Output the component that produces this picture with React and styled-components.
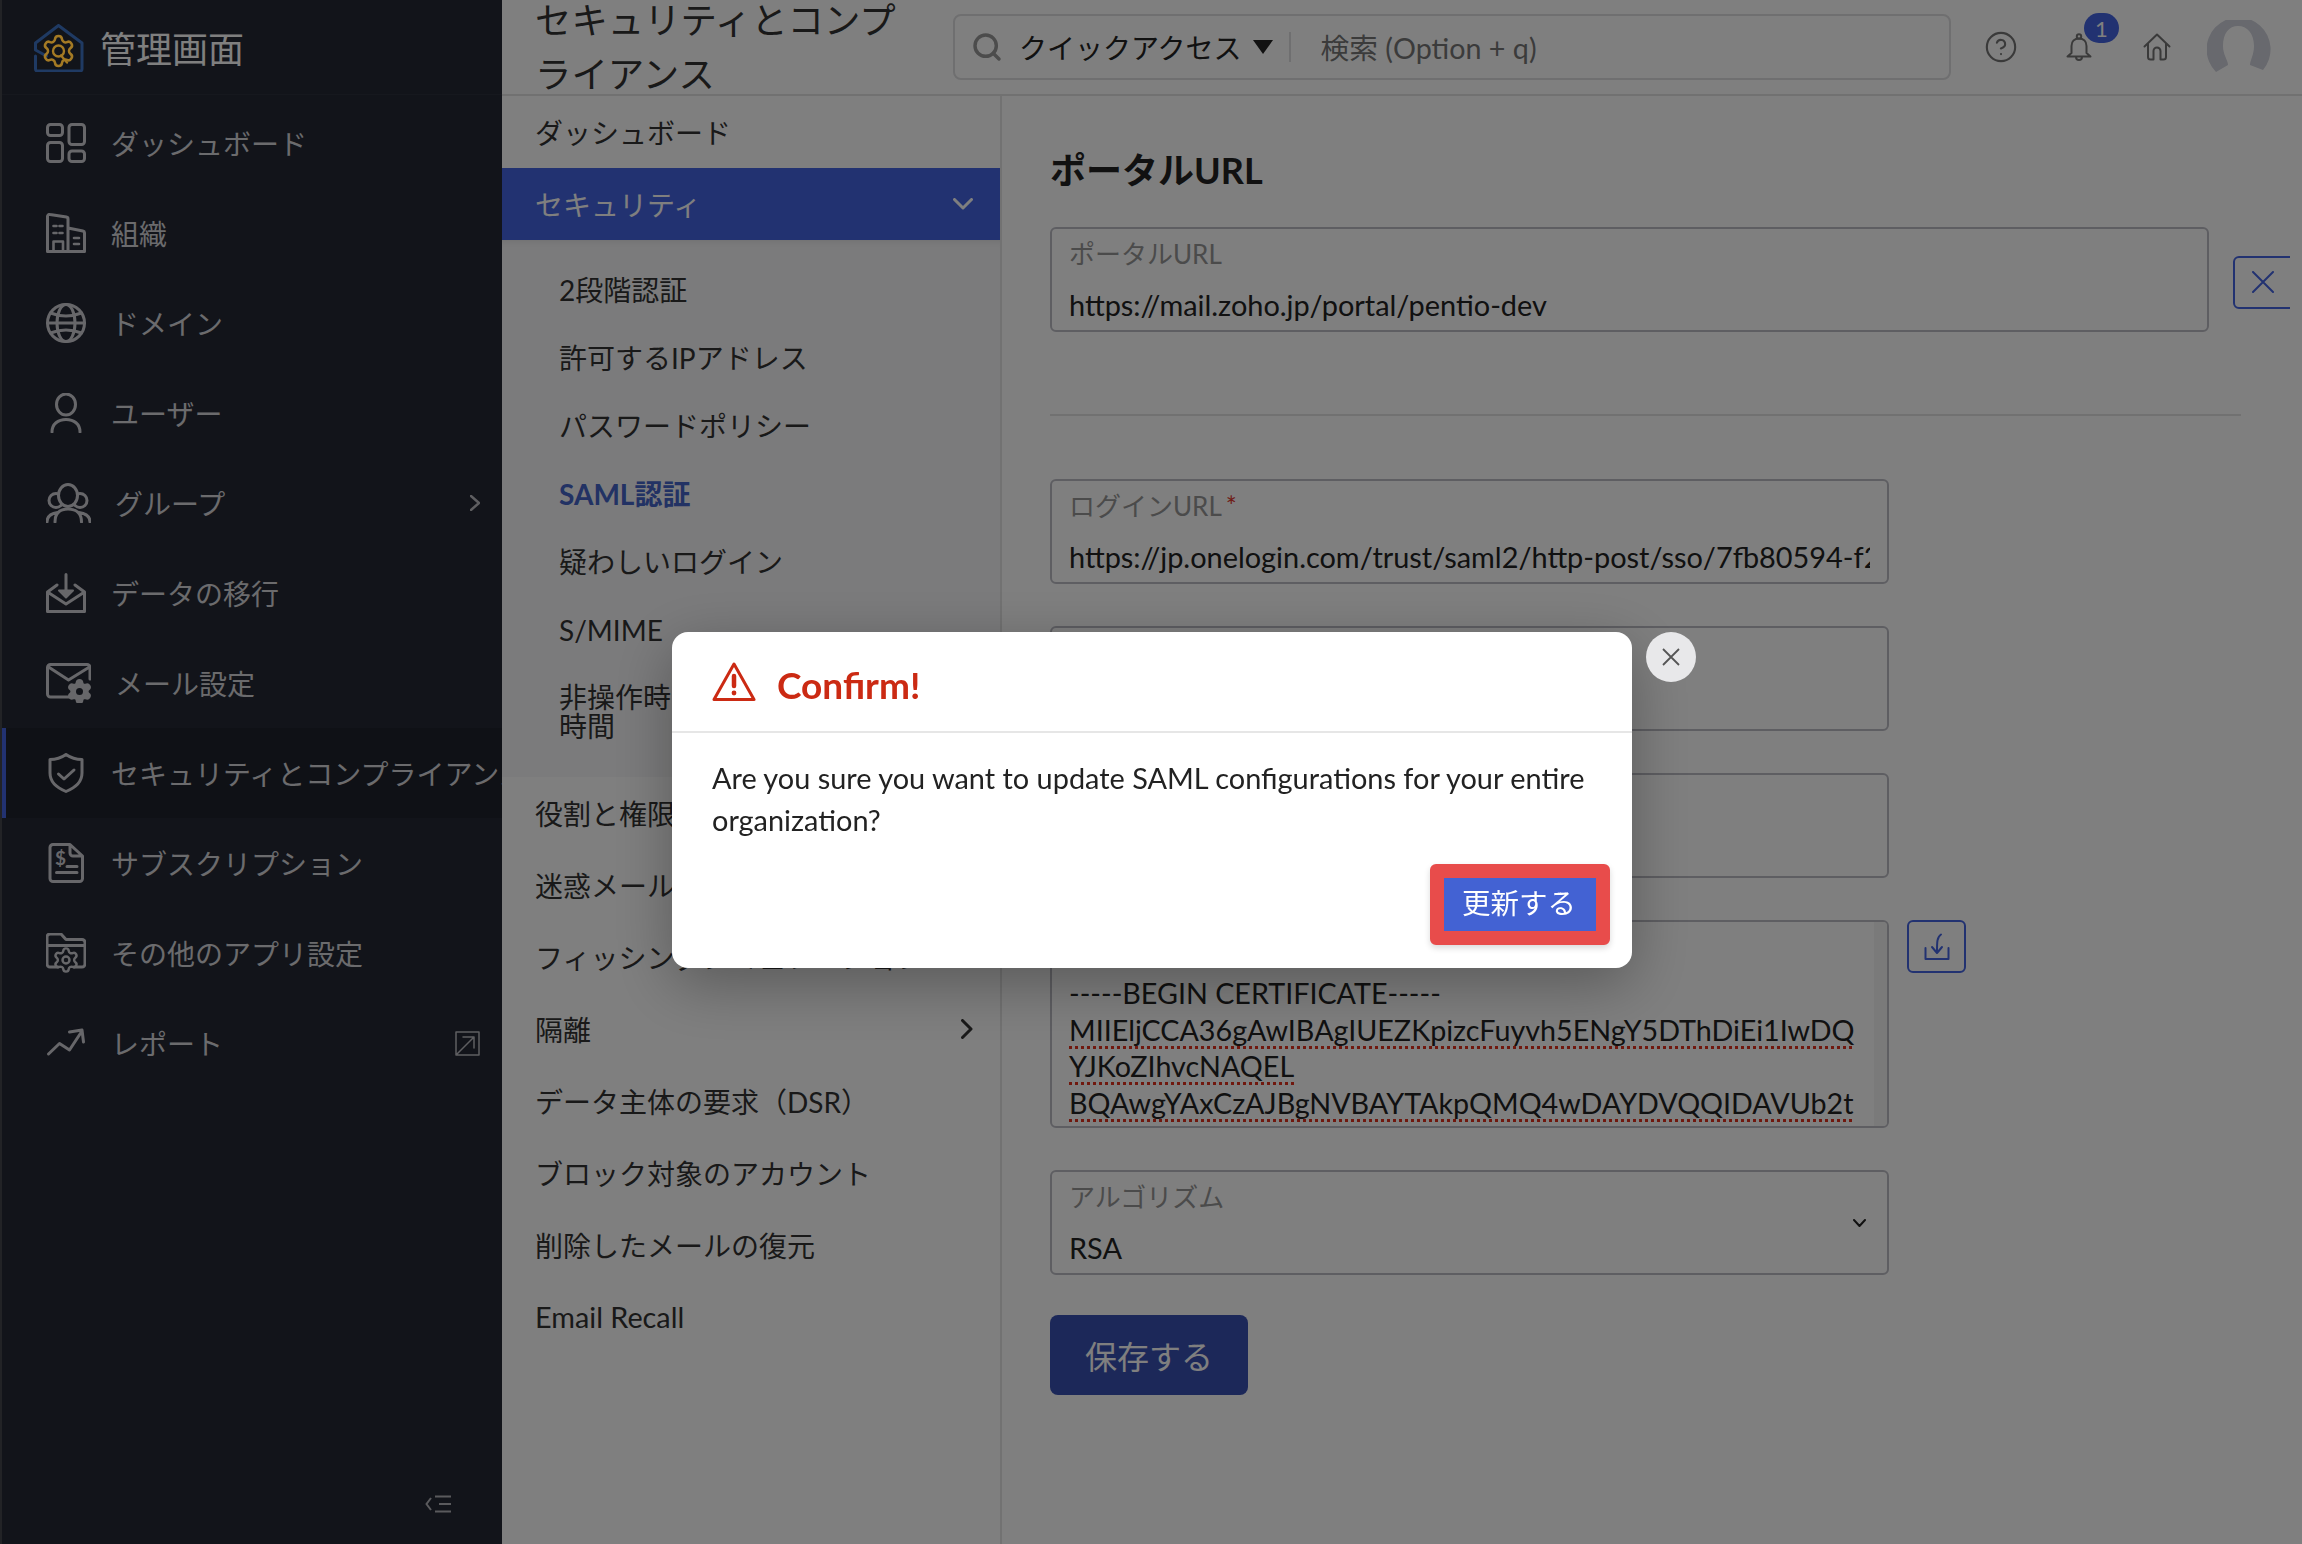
import React from "react";
import styled, { createGlobalStyle } from "styled-components";
import { Settings, Search, CircleHelp } from "lucide-react";

const GlobalStyle = createGlobalStyle`
  * { box-sizing: border-box; }
  html, body { margin: 0; padding: 0; background: #fff; }
  body {
    font-family: Lato, "Noto Sans CJK JP", sans-serif;
    color: #333;
  }
`;

const Page = styled.div`
  display: flex;
  width: 2302px;
  height: 1544px;
  overflow: hidden;
  background: #fff;
`;

/* left nav */
const Sidebar = styled.aside`
  flex: 0 0 502px;
  width: 502px;
  min-width: 0;
  overflow: hidden;
  display: flex;
  flex-direction: column;
  background: #242834;
  border-left: 2px solid #44464c;
  color: #d6d6da;
`;

const Brand = styled.div`
  display: flex;
  align-items: center;
  gap: 16px;
  height: 95px;
  padding: 0 0 0 32px;
  border-bottom: 1px solid #2c303c;
  color: #fff;
  font-size: 36px;
`;

const BrandLogo = styled.svg`
  position: relative;
  z-index: 20;
  flex: none;
  margin-top: 1px;
`;

const NavList = styled.nav`
  display: flex;
  flex-direction: column;
  padding-top: 3px;
`;

const NavItem = styled.div`
  position: relative;
  display: flex;
  align-items: center;
  height: 90px;
  padding: 0 22px 0 40px;
  font-size: 28px;
  white-space: nowrap;
  overflow: hidden;
  background: ${(p) => (p.$active ? "#1f222c" : "transparent")};
  border-left: 4px solid ${(p) => (p.$active ? "#4464e2" : "transparent")};
`;

const NavIcon = styled.svg`
  flex: none;
  margin-right: ${(p) => p.$gap || 25}px;
  fill: none;
  stroke: #cfcfd4;
  stroke-width: 3;
  stroke-linecap: round;
  stroke-linejoin: round;
`;

const NavTail = styled.svg`
  flex: none;
  margin-left: auto;
  fill: none;
  stroke: #bdbdc2;
  stroke-width: ${(p) => p.$stroke || 2.4};
  stroke-linecap: round;
  stroke-linejoin: round;
`;

const Collapse = styled.div`
  margin-top: auto;
  display: flex;
  justify-content: flex-end;
  padding: 0 51px 31px 0;
`;

/* right side */
const Main = styled.div`
  flex: 1;
  min-width: 0;
  display: flex;
  flex-direction: column;
`;

const TopBar = styled.header`
  flex: 0 0 96px;
  height: 96px;
  min-height: 0;
  overflow: hidden;
  display: flex;
  align-items: center;
  padding-left: 33px;
  border-bottom: 2px solid #e2e2e2;
`;

const PageTitle = styled.div`
  flex: 0 0 418px;
  padding-right: 33px;
  font-size: 36.4px;
  line-height: 54px;
  color: #333;
`;

const SearchBox = styled.div`
  flex: 0 0 998px;
  height: 66px;
  display: flex;
  align-items: center;
  margin-top: -1px;
  padding-left: 16px;
  border: 2px solid #dedee0;
  border-radius: 8px;
  font-size: 28px;
`;

const QuickAccess = styled.span`
  margin-left: 16px;
  color: #222;
`;

const Caret = styled.span`
  width: 0;
  height: 0;
  margin: 0 16px 0 11px;
  border-left: 10px solid transparent;
  border-right: 10px solid transparent;
  border-top: 14px solid #222;
`;

const SearchDivider = styled.span`
  width: 2px;
  height: 30px;
  background: #dedee0;
  margin-right: 30px;
`;

const SearchHint = styled.span`
  color: #777;
  font-size: 28.7px;
`;

const TopIcons = styled.div`
  display: flex;
  align-items: center;
  margin-left: 33px;
`;

const TopIcon = styled.div`
  position: relative;
  display: flex;
  margin-right: ${(p) => p.$gap}px;
  color: #757575;
`;

const Badge = styled.span`
  position: absolute;
  left: 18px;
  top: -20px;
  width: 35px;
  height: 30px;
  display: flex;
  align-items: center;
  justify-content: center;
  border-radius: 15px;
  background: #4464e2;
  color: #fff;
  font-size: 22px;
`;

const Body = styled.div`
  flex: 1;
  min-height: 0;
  display: flex;
`;

const SubNav = styled.div`
  flex: 0 0 500px;
  width: 500px;
  min-width: 0;
  overflow: hidden;
  border-right: 2px solid #e4e4e4;
  display: flex;
  flex-direction: column;
  font-size: 28px;
`;

const SubRow = styled.div`
  flex: 0 0 72px;
  display: flex;
  align-items: center;
  justify-content: space-between;
  padding: 0 27px 0 33px;
  white-space: nowrap;
  font-size: ${(p) => (p.$latin ? "28.8px" : "28px")};
  background: ${(p) => (p.$active ? "#4464e2" : "transparent")};
  color: ${(p) => (p.$active ? "#fff" : "#333")};
`;

const SubList = styled.div`
  flex: 0 0 537px;
  padding-top: 16px;
  background: #f7f7f9;
  box-shadow: inset 0 8px 10px -8px rgba(0, 0, 0, 0.12);
`;

const SubItem = styled.div`
  padding-left: 57px;
  white-space: nowrap;
  line-height: ${(p) => (p.$wrap ? "29px" : "68px")};
  padding-top: ${(p) => (p.$wrap ? "19px" : "0")};
  color: ${(p) => (p.$selected ? "#4464c8" : "#333")};
  font-weight: ${(p) => (p.$selected ? 700 : 400)};
`;

const Chevron = styled.svg`
  flex: none;
  fill: none;
  stroke: currentColor;
  stroke-width: 3;
  stroke-linecap: round;
  stroke-linejoin: round;
`;

const Content = styled.main`
  flex: 0 0 1288px;
  overflow: hidden;
  padding: 54px 0 0 48px;
`;

const Heading = styled.h1`
  margin: 0 0 37px;
  font-size: 36px;
  line-height: 40px;
  font-weight: 700;
  color: #222;
`;

const Row = styled.div`
  display: flex;
  align-items: ${(p) => p.$align || "flex-start"};
  gap: ${(p) => p.$gap || 18}px;
  margin-bottom: ${(p) => p.$mb ?? 42}px;
`;

const Field = styled.div`
  position: relative;
  flex: 0 0 ${(p) => p.$width || 839}px;
  height: ${(p) => p.$height || 105}px;
  padding: 10px 17px 0;
  border: 2px solid #bcbcc4;
  border-radius: 6px;
  overflow: hidden;
`;

const FieldLabel = styled.div`
  font-size: 26px;
  line-height: 30px;
  color: #969696;
`;

const Required = styled.span`
  color: #e03a2f;
  margin-left: 4px;
`;

const FieldValue = styled.div`
  margin-top: 20px;
  font-size: 28.9px;
  line-height: 32px;
  color: #222;
  white-space: nowrap;
  overflow: hidden;
`;

const CertText = styled.div`
  margin-top: 13px;
  font-size: 28.7px;
  line-height: 36.6px;
  color: #222;
  white-space: nowrap;
`;

const Misspelled = styled.span`
  text-decoration: underline dotted #e0301c 3px;
  text-decoration-skip-ink: none;
  text-underline-offset: 5px;
`;

const ScrollTrack = styled.div`
  position: absolute;
  top: 0;
  right: 0;
  bottom: 0;
  width: 13px;
  background: #f4f4f4;
`;

const SelectArrow = styled.svg`
  position: absolute;
  right: 21px;
  top: 47px;
  fill: none;
  stroke: #222;
  stroke-width: 2;
  stroke-linecap: round;
  stroke-linejoin: round;
`;

const Divider = styled.hr`
  width: 1191px;
  height: 2px;
  margin: 82px 0 63px;
  border: 0;
  background: #e2e2e2;
`;

const OutlineButton = styled.div`
  flex: none;
  display: flex;
  align-items: center;
  justify-content: ${(p) => (p.$clipped ? "flex-start" : "center")};
  padding-left: ${(p) => (p.$clipped ? "17px" : "0")};
  margin-top: ${(p) => (p.$clipped ? "5px" : "0")};
  width: ${(p) => p.$width}px;
  height: 53px;
  border: 2px solid #4464e2;
  border-radius: 6px;
  color: #4464e2;
`;

const OutlineIcon = styled.svg`
  fill: none;
  stroke: currentColor;
  stroke-width: 2;
  stroke-linecap: round;
  stroke-linejoin: round;
`;

const SaveButton = styled.button`
  display: block;
  width: 198px;
  height: 80px;
  border: 0;
  border-radius: 8px;
  background: #3950b2;
  color: #fff;
  font: inherit;
  font-size: 32px;
`;

/* dialog */
const Backdrop = styled.div`
  position: fixed;
  inset: 0;
  z-index: 10;
  display: flex;
  justify-content: center;
  align-items: flex-start;
  padding: 632px 0 0 2px;
  background: rgba(0, 0, 0, 0.5);
`;

const Modal = styled.div`
  position: relative;
  width: 960px;
  height: 336px;
  border-radius: 16px;
  background: #fff;
  box-shadow: 0 16px 60px rgba(0, 0, 0, 0.3);
`;

const ModalClose = styled.div`
  position: absolute;
  top: 0;
  right: -64px;
  width: 50px;
  height: 50px;
  display: flex;
  align-items: center;
  justify-content: center;
  border-radius: 50%;
  background: #e8e8ea;
  color: #555;
`;

const ModalHead = styled.div`
  display: flex;
  align-items: center;
  gap: 21px;
  height: 101px;
  padding: 0 40px;
  border-bottom: 2px solid #e6e6e6;
`;

const ModalTitle = styled.div`
  font-size: 37px;
  font-weight: 700;
  color: #cb2a13;
  padding-top: 5px;
`;

const ModalText = styled.p`
  margin: 0;
  padding: 24px 40px 0;
  font-size: 28.9px;
  line-height: 41.5px;
  color: #222;
`;

const ModalFoot = styled.div`
  display: flex;
  justify-content: flex-end;
  padding: 24px 22px 0 0;
`;

const ConfirmButton = styled.button`
  width: 180px;
  height: 81px;
  border: 14px solid #e84c4b;
  border-radius: 6px;
  background: #4362d3;
  color: #fff;
  font: inherit;
  font-size: 28.5px;
  line-height: 1;
  padding: 0 2px 2px 0;
  box-shadow: 0 3px 6px rgba(0, 0, 0, 0.15);
`;

const LogoMark = () => (
  <BrandLogo width="50" height="48" viewBox="0 0 50 48" fill="none" strokeLinecap="round" strokeLinejoin="round">
    <path d="M1.5 32V45a2 2 0 0 0 2 2H46a2 2 0 0 0 2-2V19L24.5 1.5 1.5 19v7L12.5 32" stroke="#1f3a63" strokeWidth="3" />
    <Settings x="6.5" y="9" width="36" height="36" color="#a47a24" strokeWidth="1.7" />
    <circle cx="24.5" cy="27" r="5.5" stroke="#a47a24" strokeWidth="2.4" fill="#12141a" />
    <path d="M27 31.5l6 7" stroke="#a47a24" strokeWidth="2.4" />
  </BrandLogo>
);

const icons = {
  dashboard: (
    <>
      <rect x="1.5" y="1.5" width="15" height="11" rx="3" />
      <rect x="23" y="1.5" width="15.5" height="20" rx="3" />
      <rect x="1.5" y="19.5" width="15" height="19" rx="3" />
      <rect x="23" y="28" width="15.5" height="10.5" rx="3" />
    </>
  ),
  org: (
    <>
      <path d="M22 38.5V6a2 2 0 0 0-1.6-2L4 1.5A2 2 0 0 0 1.5 3.5v35H38.5V20a2 2 0 0 0-1.6-2L22 15" />
      <path d="M7.5 38V28.5h9.5V38M7.5 13h3M13.5 13h3M7.5 20h3M13.5 20h3M28 25h5M28 31h5" strokeWidth="2.6" />
    </>
  ),
  globe: (
    <>
      <circle cx="20" cy="20" r="18.5" />
      <ellipse cx="20" cy="20" rx="9" ry="18.5" />
      <path d="M1.5 20h37M4.5 10Q20 16 35.5 10M4.5 30Q20 24 35.5 30" />
    </>
  ),
  user: (
    <>
      <ellipse cx="20" cy="11.5" rx="9.5" ry="10.5" />
      <path d="M6 39C6 31 12 26.5 20 26.5S34 31 34 39" />
    </>
  ),
  group: (
    <>
      <circle cx="10" cy="17.5" r="7" />
      <circle cx="34" cy="17.5" r="7" />
      <ellipse cx="22" cy="12.5" rx="9.5" ry="11" fill="#242834" />
      <path d="M9 39C9 30 14 26 22 26S35.5 30 35.5 39M1 39C1 34 5 30.5 11.5 29.5M44 39C44 34 40 30.5 33 29.5" />
    </>
  ),
  inbox: (
    <>
      <path d="M11 12L1.5 19V38.5H38.5V19L29 12M1.5 19L20 31 38.5 19M20 1.5V17" />
      <path d="M13 17.5H27L20 24.5Z" fill="#cfcfd4" strokeWidth="2" />
    </>
  ),
  mail: (
    <>
      <path d="M26 34H4.5a3 3 0 0 1-3-3V4.5a3 3 0 0 1 3-3H41a3 3 0 0 1 3 3V16M2.5 4L22.5 17 43.5 4" />
      <Settings x="20" y="15" width="27" height="27" color="#cfcfd4" fill="#cfcfd4" strokeWidth="2.2" />
      <circle cx="33.5" cy="28.5" r="3.5" fill="#242834" stroke="none" />
    </>
  ),
  shield: (
    <>
      <path d="M20 1.5C25 5 30 6.5 36 6.5V20C36 29 30 34 20 38.5 10 34 4 29 4 20V6.5C10 6.5 15 5 20 1.5Z" />
      <path d="M12.5 21L18 26 28 17" />
    </>
  ),
  doc: (
    <>
      <path d="M7 1.5H24L36.5 13V35.5a3 3 0 0 1-3 3H7a3 3 0 0 1-3-3V4.5a3 3 0 0 1 3-3ZM24 2V10a3 3 0 0 0 3 3H36M21 23.5H31M10.5 29.5H31" />
      <text x="9" y="22" fontSize="19" fontWeight="700" fill="#cfcfd4" stroke="none">$</text>
    </>
  ),
  folder: (
    <>
      <path d="M12 34H4a3 3 0 0 1-3-3V4a3 3 0 0 1 3-3H15L20 6.5H36a3 3 0 0 1 3 3V31a3 3 0 0 1-3 3H28M1.5 12.5H38.5" />
      <Settings x="6" y="13" width="28" height="28" color="#cfcfd4" strokeWidth="2.1" />
    </>
  ),
  trend: <path d="M2.5 31L13.5 20.5 23.5 27 36 8M23.5 9L36 7 37.5 19" />,
};

const NavGlyph = ({ name, wide }) => (
  <NavIcon width={wide ? 45 : 40} height="40" viewBox={wide ? "0 0 45 40" : "0 0 40 40"} $gap={wide ? 24 : 25}>
    {icons[name]}
  </NavIcon>
);

const navItems = [
  { name: "dashboard", label: "ダッシュボード" },
  { name: "org", label: "組織" },
  { name: "globe", label: "ドメイン" },
  { name: "user", label: "ユーザー" },
  { name: "group", label: "グループ", wide: true, tail: "chevron" },
  { name: "inbox", label: "データの移行" },
  { name: "mail", label: "メール設定", wide: true },
  { name: "shield", label: "セキュリティとコンプライアンス", active: true },
  { name: "doc", label: "サブスクリプション" },
  { name: "folder", label: "その他のアプリ設定" },
  { name: "trend", label: "レポート", tail: "external" },
];

const subItems = ["2段階認証", "許可するIPアドレス", "パスワードポリシー", "SAML認証", "疑わしいログイン", "S/MIME"];

const subRowsBelow = [
  "役割と権限",
  "迷惑メール",
  "フィッシングシミュレーション",
  "隔離",
  "データ主体の要求（DSR）",
  "ブロック対象のアカウント",
  "削除したメールの復元",
  "Email Recall",
];

export default function App() {
  return (
    <Page>
      <GlobalStyle />
      <Sidebar>
        <Brand>
          <LogoMark />
          <span>管理画面</span>
        </Brand>
        <NavList>
          {navItems.map((item) => (
            <NavItem key={item.name} $active={item.active}>
              <NavGlyph name={item.name} wide={item.wide} />
              {item.label}
              {item.tail === "chevron" && (
                <NavTail width="10" height="16" viewBox="0 0 10 16">
                  <path d="M1 1L9 8 1 15" />
                </NavTail>
              )}
              {item.tail === "external" && (
                <NavTail width="25" height="25" viewBox="0 0 25 25" $stroke="1.5">
                  <path d="M1 1H24V24H1V1M1 24L19 6M8 6H19V17" />
                </NavTail>
              )}
            </NavItem>
          ))}
        </NavList>
        <Collapse>
          <svg width="26" height="18" viewBox="0 0 26 18" fill="none" stroke="#b5b5ba" strokeWidth="2">
            <path d="M6 3L1.5 9 6 15M10 1.5H26M14 9H26M10 16.5H26" />
          </svg>
        </Collapse>
      </Sidebar>

      <Main>
        <TopBar>
          <PageTitle>セキュリティとコンプライアンス</PageTitle>
          <SearchBox>
            <Search size={32} color="#999" strokeWidth={2.6} />
            <QuickAccess>クイックアクセス</QuickAccess>
            <Caret />
            <SearchDivider />
            <SearchHint>検索 (Option + q)</SearchHint>
          </SearchBox>
          <TopIcons>
            <TopIcon $gap={48}>
              <CircleHelp size={34} strokeWidth={1.5} />
            </TopIcon>
            <TopIcon $gap={51}>
              <svg width="26" height="28" viewBox="0 0 26 28" fill="none" stroke="currentColor" strokeWidth="2" strokeLinejoin="round">
                <circle cx="13" cy="3.5" r="2.2" />
                <path d="M5.5 20V13C5.5 8.5 8.5 5.5 13 5.5S20.5 8.5 20.5 13V20L24.5 23.5H1.5ZM10 24a3 3 0 0 0 6 0" />
              </svg>
              <Badge>1</Badge>
            </TopIcon>
            <TopIcon $gap={36}>
              <svg width="28" height="28" viewBox="0 0 28 28" fill="none" stroke="currentColor" strokeWidth="2" strokeLinecap="round" strokeLinejoin="round">
                <path d="M1.5 13.5L14 1.5 26.5 13.5M5 10.5V24a2.5 2.5 0 0 0 2.5 2.5H10.5V18a3.5 3.5 0 0 1 7 0V26.5H20.5A2.5 2.5 0 0 0 23 24V10.5" />
              </svg>
            </TopIcon>
            <svg width="64" height="54" viewBox="0 0 64 54" fill="#d0d2dc">
              <path d="M9 52A32 32 0 1 1 56 50L43 45C43 40 47 35 47 26 47 13 40 6 31 6 22 6 16 13 16 26 16 35 21 40 21 45Z" />
            </svg>
          </TopIcons>
        </TopBar>

        <Body>
          <SubNav>
            <SubRow>ダッシュボード</SubRow>
            <SubRow $active>
              セキュリティ
              <Chevron width="20" height="12" viewBox="0 0 20 12">
                <path d="M1.5 1.5L10 10 18.5 1.5" />
              </Chevron>
            </SubRow>
            <SubList>
              {subItems.map((label) => (
                <SubItem key={label} $selected={label === "SAML認証"}>
                  {label}
                </SubItem>
              ))}
              <SubItem $wrap>
                非操作時のセッションタイムアウト
                <br />
                時間
              </SubItem>
            </SubList>
            {subRowsBelow.map((label) => (
              <SubRow key={label} $latin={label === "Email Recall"}>
                {label}
                {label === "隔離" && (
                  <Chevron width="12" height="20" viewBox="0 0 12 20">
                    <path d="M1.5 1.5L10 10 1.5 18.5" />
                  </Chevron>
                )}
              </SubRow>
            ))}
          </SubNav>

          <Content>
            <Heading>ポータルURL</Heading>
            <Row $gap={24} $align="center" $mb={0}>
              <Field $width={1159}>
                <FieldLabel>ポータルURL</FieldLabel>
                <FieldValue>https://mail.zoho.jp/portal/pentio-dev</FieldValue>
              </Field>
              <OutlineButton $width={70} $clipped>
                <OutlineIcon width="22" height="22" viewBox="0 0 22 22">
                  <path d="M1 1L21 21M21 1L1 21" />
                </OutlineIcon>
              </OutlineButton>
            </Row>
            <Divider />
            <Row>
              <Field>
                <FieldLabel>
                  ログインURL<Required>*</Required>
                </FieldLabel>
                <FieldValue>https://jp.onelogin.com/trust/saml2/http-post/sso/7fb80594-f2a1-4c3e-9d10</FieldValue>
              </Field>
            </Row>
            <Row>
              <Field>
                <FieldLabel>ログアウトURL</FieldLabel>
              </Field>
            </Row>
            <Row>
              <Field>
                <FieldLabel>パスワード変更URL</FieldLabel>
              </Field>
            </Row>
            <Row>
              <Field $height={208}>
                <FieldLabel>公開鍵</FieldLabel>
                <CertText>
                  -----BEGIN CERTIFICATE-----
                  <br />
                  <Misspelled>MIIEljCCA36gAwIBAgIUEZKpizcFuyvh5ENgY5DThDiEi1IwDQ</Misspelled>
                  <br />
                  <Misspelled>YJKoZIhvcNAQEL</Misspelled>
                  <br />
                  <Misspelled>BQAwgYAxCzAJBgNVBAYTAkpQMQ4wDAYDVQQIDAVUb2t</Misspelled>
                </CertText>
                <ScrollTrack />
              </Field>
              <OutlineButton $width={59}>
                <OutlineIcon width="26" height="28" viewBox="0 0 26 28">
                  <path d="M1.5 15V26H24.5V15M17 1.5C13 4 13 9 13 19M8 14L13 20 18 14" />
                </OutlineIcon>
              </OutlineButton>
            </Row>
            <Row $mb={40}>
              <Field>
                <FieldLabel>アルゴリズム</FieldLabel>
                <FieldValue>RSA</FieldValue>
                <SelectArrow width="13" height="8" viewBox="0 0 13 8">
                  <path d="M1 1L6.5 7 12 1" />
                </SelectArrow>
              </Field>
            </Row>
            <SaveButton>保存する</SaveButton>
          </Content>
        </Body>
      </Main>

      <Backdrop>
        <Modal>
          <ModalClose>
            <svg width="18" height="18" viewBox="0 0 18 18" fill="none" stroke="currentColor" strokeWidth="1.8">
              <path d="M1 1L17 17M17 1L1 17" />
            </svg>
          </ModalClose>
          <ModalHead>
            <svg width="44" height="40" viewBox="0 0 44 40" fill="none" stroke="#cb2a13" strokeWidth="3" strokeLinejoin="round" strokeLinecap="round">
              <path d="M22 2L42 37.5H2Z" />
              <path d="M22 14V24" strokeWidth="4.5" />
              <circle cx="22" cy="31" r="2.4" fill="#cb2a13" stroke="none" />
            </svg>
            <ModalTitle>Confirm!</ModalTitle>
          </ModalHead>
          <ModalText>Are you sure you want to update SAML configurations for your entire organization?</ModalText>
          <ModalFoot>
            <ConfirmButton>更新する</ConfirmButton>
          </ModalFoot>
        </Modal>
      </Backdrop>
    </Page>
  );
}
